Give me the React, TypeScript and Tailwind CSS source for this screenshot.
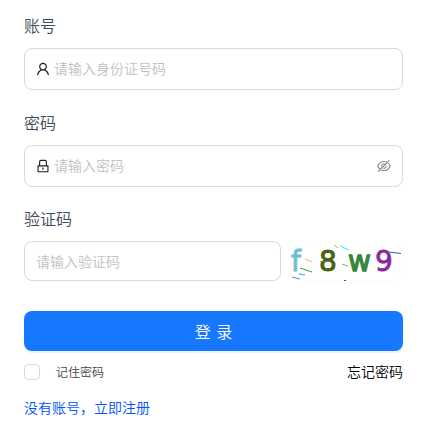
import type { ReactNode } from "react";
import { AiOutlineEyeInvisible, AiOutlineLock, AiOutlineUser } from "react-icons/ai";

function Field({ label, placeholder, icon, suffix }: { label: string; placeholder: string; icon: ReactNode; suffix?: ReactNode }) {
  return (
    <div className="mb-[17px]">
      <label className="mb-[7px] block h-[31px] text-base leading-[31px] text-[#40485b]">{label}</label>
      <div className="flex h-[42px] items-center rounded-lg border border-[#d9d9d9] px-[10px] text-sm">
        <span className="mr-[3px] text-[#1f1f1f]">{icon}</span>
        <input className="min-w-0 flex-1 pb-[2px] outline-none placeholder:text-[#bfbfbf]" placeholder={placeholder} />
        {suffix}
      </div>
    </div>
  );
}

function Captcha() {
  return (
    <svg className="h-10 w-28" viewBox="0 0 112 40" fontFamily="'DejaVu Sans', sans-serif" fontSize="28" fontWeight="400">
      <rect x=".5" y=".5" width="111" height="39" rx="8" fill="none" stroke="#fafafa" />
      <g fill="none" strokeWidth="1">
        <path d="M14 18l7 3" stroke="#edbd50" />
        <path d="M9 27l12 4" stroke="#329657" />
        <path d="M8 33l6 1" stroke="#68c4f4" strokeWidth="1.5" />
        <path d="M1 36l8 2" stroke="#5093e0" />
        <path d="M43 4l4 3" stroke="#a5bf40" />
        <path d="M49 5l9 4" stroke="#42e5ee" />
        <path d="M51 23l6 2" stroke="#47c97b" />
        <path d="M53 39.5h2" stroke="#842785" />
      </g>
      <g strokeWidth=".9">
        <text x="0" y="30.3" fill="#70c0cc" stroke="#70c0cc">f</text>
        <text x="28" y="30.3" fill="#4a610d" stroke="#4a610d">8</text>
        <text x="57" y="30.3" fill="#36873c" stroke="#36873c" strokeWidth="1.3">w</text>
        <text x="84" y="30.3" fill="#892aa0" stroke="#892aa0" strokeWidth=".8">9</text>
      </g>
      <path d="M29 20.5h10" stroke="#488a90" strokeWidth=".8" />
      <path d="M98 11l12 1.5" stroke="#3557c7" />
    </svg>
  );
}

export default function App() {
  return (
    <form className="h-[422px] w-[426px] bg-white pt-[10px] pr-[23px] pl-6 font-['Noto_Sans_CJK_SC',sans-serif] font-[350]">
      <Field label="账号" placeholder="请输入身份证号码" icon={<AiOutlineUser size={16} />} />
      <Field
        label="密码"
        placeholder="请输入密码"
        icon={<AiOutlineLock size={16} />}
        suffix={<AiOutlineEyeInvisible size={16} className="text-[#8c8c8c]" />}
      />
      <label className="-mt-px mb-[7px] block h-[31px] text-base leading-[31px] text-[#40485b]">验证码</label>
      <div className="flex h-10 gap-[10px]">
        <input className="w-[257px] rounded-lg border border-[#d9d9d9] px-[11px] text-sm outline-none placeholder:text-[#bfbfbf]" placeholder="请输入验证码" />
        <Captcha />
      </div>
      <button type="button" className="mt-[30px] h-10 w-full rounded-lg bg-[#1677ff] text-base text-white shadow-[0_2px_0_rgba(5,145,255,0.1)] [word-spacing:2px]">
        登 录
      </button>
      <div className="mt-[10px] flex h-[22px] items-center justify-between">
        <label className="flex items-center gap-4 text-xs text-[#444]">
          <input type="checkbox" className="size-4 appearance-none rounded border border-[#d9d9d9]" />
          记住密码
        </label>
        <a className="pb-[2px] text-sm text-black">忘记密码</a>
      </div>
      <a className="mt-[13px] block text-sm leading-[22px] text-[#0052ff]">没有账号，立即注册</a>
    </form>
  );
}
